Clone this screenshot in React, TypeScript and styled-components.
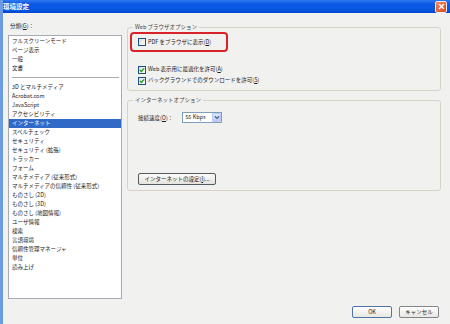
import * as React from 'react';
import styled, { createGlobalStyle } from 'styled-components';

const GlobalStyle = createGlobalStyle`
	html, body {
		margin: 0;
		padding: 0;
		background: #f1f1ef;
	}
	body {
		font-family: "Noto Sans CJK JP", "Liberation Sans", sans-serif;
		font-size: 5.5px;
		color: #1a1a1a;
	}
`;

const categories = [
	'3D とマルチメディア',
	'Acrobat.com',
	'JavaScript',
	'アクセシビリティ',
	'インターネット',
	'スペルチェック',
	'セキュリティ',
	'セキュリティ (拡張)',
	'トラッカー',
	'フォーム',
	'マルチメディア (従来形式)',
	'マルチメディアの信頼性 (従来形式)',
	'ものさし (2D)',
	'ものさし (3D)',
	'ものさし (地図情報)',
	'ユーザ情報',
	'検索',
	'言語環境',
	'信頼性管理マネージャ',
	'単位',
	'読み上げ',
];

const topCategories = ['フルスクリーンモード', 'ページ表示', '一般', '文書'];

function CheckBox(props: { checked?: boolean }) {
	return (
		<StyledCheck>
			{props.checked && (
				<svg width="6" height="6" viewBox="0 0 7 7">
					<path d="M1 3.4 L2.8 5.2 L6 1.6" fill="none" stroke="#21a121" strokeWidth="1.6" />
				</svg>
			)}
		</StyledCheck>
	);
}

export default function App() {
	return (
		<>
			<GlobalStyle />
			<Window>
				<TitleBar>
					<span>環境設定</span>
					<CloseButton>
						<svg width="7" height="7" viewBox="0 0 7 7">
							<path d="M1 1 L6 6 M6 1 L1 6" stroke="white" strokeWidth="1.4" />
						</svg>
					</CloseButton>
				</TitleBar>
				<Body>
					<Main>
						<LeftColumn>
							<Label>分類(<u>G</u>)：</Label>
							<ListBox>
								{topCategories.map((c) => (
									<ListItem key={c}>{c}</ListItem>
								))}
								<Separator />
								{categories.map((c) => (
									<ListItem key={c} selected={c === 'インターネット'}>{c}</ListItem>
								))}
							</ListBox>
						</LeftColumn>
						<RightColumn>
							<Group height={64} spacing={5}>
								<Legend>Web ブラウザオプション</Legend>
								<Highlight>
									<CheckBox />
									<span>PDF をブラウザに表示(<u>D</u>)</span>
								</Highlight>
								<CheckRow top={13}>
									<CheckBox checked />
									<span>Web 表示用に最適化を許可(<u>A</u>)</span>
								</CheckRow>
								<CheckRow top={2}>
									<CheckBox checked />
									<span>バックグラウンドでのダウンロードを許可(<u>S</u>)</span>
								</CheckRow>
							</Group>
							<Group height={91} spacing={9}>
								<Legend>インターネットオプション</Legend>
								<SpeedRow>
									<span>接続速度(<u>O</u>)：</span>
									<Select>
										<span>56 Kbps</span>
										<SelectArrow>
											<svg width="6" height="5" viewBox="0 0 7 5">
												<path d="M1 1 L3.5 3.5 L6 1" fill="none" stroke="#4d6185" strokeWidth="1.5" />
											</svg>
										</SelectArrow>
									</Select>
								</SpeedRow>
								<SettingsButton>インターネットの設定(<u>I</u>)...</SettingsButton>
							</Group>
						</RightColumn>
					</Main>
					<Footer>
						<DialogButton primary>OK</DialogButton>
						<DialogButton>キャンセル</DialogButton>
					</Footer>
				</Body>
			</Window>
		</>
	);
}

const Window = styled.div`
	width: 450px;
	height: 324px;
	display: flex;
	flex-direction: column;
	box-sizing: border-box;
	border-left: 3px solid #6b9be2;
	background: #f1f1ef;
	overflow: hidden;
`;

const TitleBar = styled.div`
	height: 13px;
	margin-left: -3px;
	display: flex;
	align-items: center;
	justify-content: space-between;
	padding: 0 3px 0 3px;
	background: linear-gradient(#2f78f0, #0a5ae6 30%, #0656e2 75%, #0048ce);
	color: white;
	font-size: 6.5px;
	font-weight: bold;
	line-height: 13px;
`;

const CloseButton = styled.div`
	width: 10px;
	height: 10px;
	display: flex;
	align-items: center;
	justify-content: center;
	border: 1px solid #f4e8e2;
	border-radius: 2px;
	background: linear-gradient(135deg, #ee8a66, #d9461c);
`;

const Body = styled.div`
	flex: 1;
	display: flex;
	flex-direction: column;
	padding: 9px 9px 0 5px;
`;

const Main = styled.div`
	height: 277px;
	display: flex;
	gap: 5px;
`;

const LeftColumn = styled.div`
	width: 114px;
	display: flex;
	flex-direction: column;
`;

const Label = styled.div`
	line-height: 9px;
	height: 9px;
	padding-left: 2px;
	margin-bottom: 4px;
	white-space: nowrap;
`;

const ListBox = styled.div`
	flex: 1;
	box-sizing: border-box;
	border: 1px solid #a5acb5;
	background: white;
	padding-top: 1px;
`;

const ListItem = styled.div<{ selected?: boolean }>`
	height: 9px;
	line-height: 9px;
	padding-left: 3px;
	white-space: nowrap;
	background: ${(p) => (p.selected ? '#3169c6' : 'transparent')};
	color: ${(p) => (p.selected ? 'white' : '#1a1a1a')};
`;

const Separator = styled.div`
	height: 1px;
	margin: 4px 2px 5px 3px;
	background: #aaaaaa;
`;

const RightColumn = styled.div`
	flex: 1;
	display: flex;
	flex-direction: column;
`;

const Group = styled.div<{ height: number; spacing: number }>`
	height: ${(p) => p.height}px;
	margin-top: ${(p) => p.spacing}px;
	box-sizing: border-box;
	border: 1px solid #d6d3c6;
	border-radius: 3px;
	padding: 0 0 5px 2px;
	display: flex;
	flex-direction: column;
	align-items: flex-start;
`;

const Legend = styled.div`
	margin: -5px 0 0 3px;
	padding: 0 2px;
	height: 9px;
	line-height: 9px;
	color: #444;
	background: #f1f1ef;
	white-space: nowrap;
`;

const Highlight = styled.div`
	width: 98px;
	height: 21px;
	box-sizing: border-box;
	border: 2px solid #d9232a;
	border-radius: 4px;
	display: flex;
	align-items: center;
	gap: 2px;
	padding-left: 6px;
	white-space: nowrap;
`;

const CheckRow = styled.div<{ top: number }>`
	margin-top: ${(p) => p.top}px;
	padding-left: 8px;
	height: 9px;
	line-height: 9px;
	display: flex;
	align-items: center;
	gap: 2px;
	white-space: nowrap;
`;

const StyledCheck = styled.div`
	width: 6px;
	height: 6px;
	flex: none;
	border: 1px solid #1c5180;
	background: linear-gradient(135deg, #dcdcd7, #ffffff);
	display: flex;
	align-items: center;
	justify-content: center;
	box-sizing: content-box;
`;

const SpeedRow = styled.div`
	margin-top: 7px;
	padding-left: 8px;
	display: flex;
	align-items: center;
	gap: 9px;
	white-space: nowrap;
`;

const Select = styled.div`
	width: 40px;
	height: 11px;
	box-sizing: border-box;
	border: 1px solid #7f9db9;
	background: white;
	display: flex;
	align-items: center;
	justify-content: space-between;
	padding-left: 2px;
	line-height: 9px;
`;

const SelectArrow = styled.div`
	width: 9px;
	height: 9px;
	box-sizing: border-box;
	border: 1px solid #b7c9f3;
	border-radius: 1px;
	background: linear-gradient(#dfe8fd, #b9cdf8);
	display: flex;
	align-items: center;
	justify-content: center;
`;

const SettingsButton = styled.div`
	margin: auto 0 0 8px;
	width: 78px;
	height: 12px;
	box-sizing: border-box;
	border: 1px solid #555a60;
	border-radius: 2px;
	background: linear-gradient(#fbfbfa, #e4e3de);
	line-height: 10px;
	text-align: center;
	white-space: nowrap;
`;

const Footer = styled.div`
	margin-top: 7px;
	display: flex;
	justify-content: flex-end;
	gap: 7px;
	padding-right: 2px;
`;

const DialogButton = styled.div<{ primary?: boolean }>`
	width: 40px;
	height: 12px;
	box-sizing: border-box;
	border: 1px solid ${(p) => (p.primary ? '#4f74a8' : '#808488')};
	border-radius: 2px;
	background: linear-gradient(#ffffff, #e8e7e2);
	line-height: 10px;
	text-align: center;
	white-space: nowrap;
`;
